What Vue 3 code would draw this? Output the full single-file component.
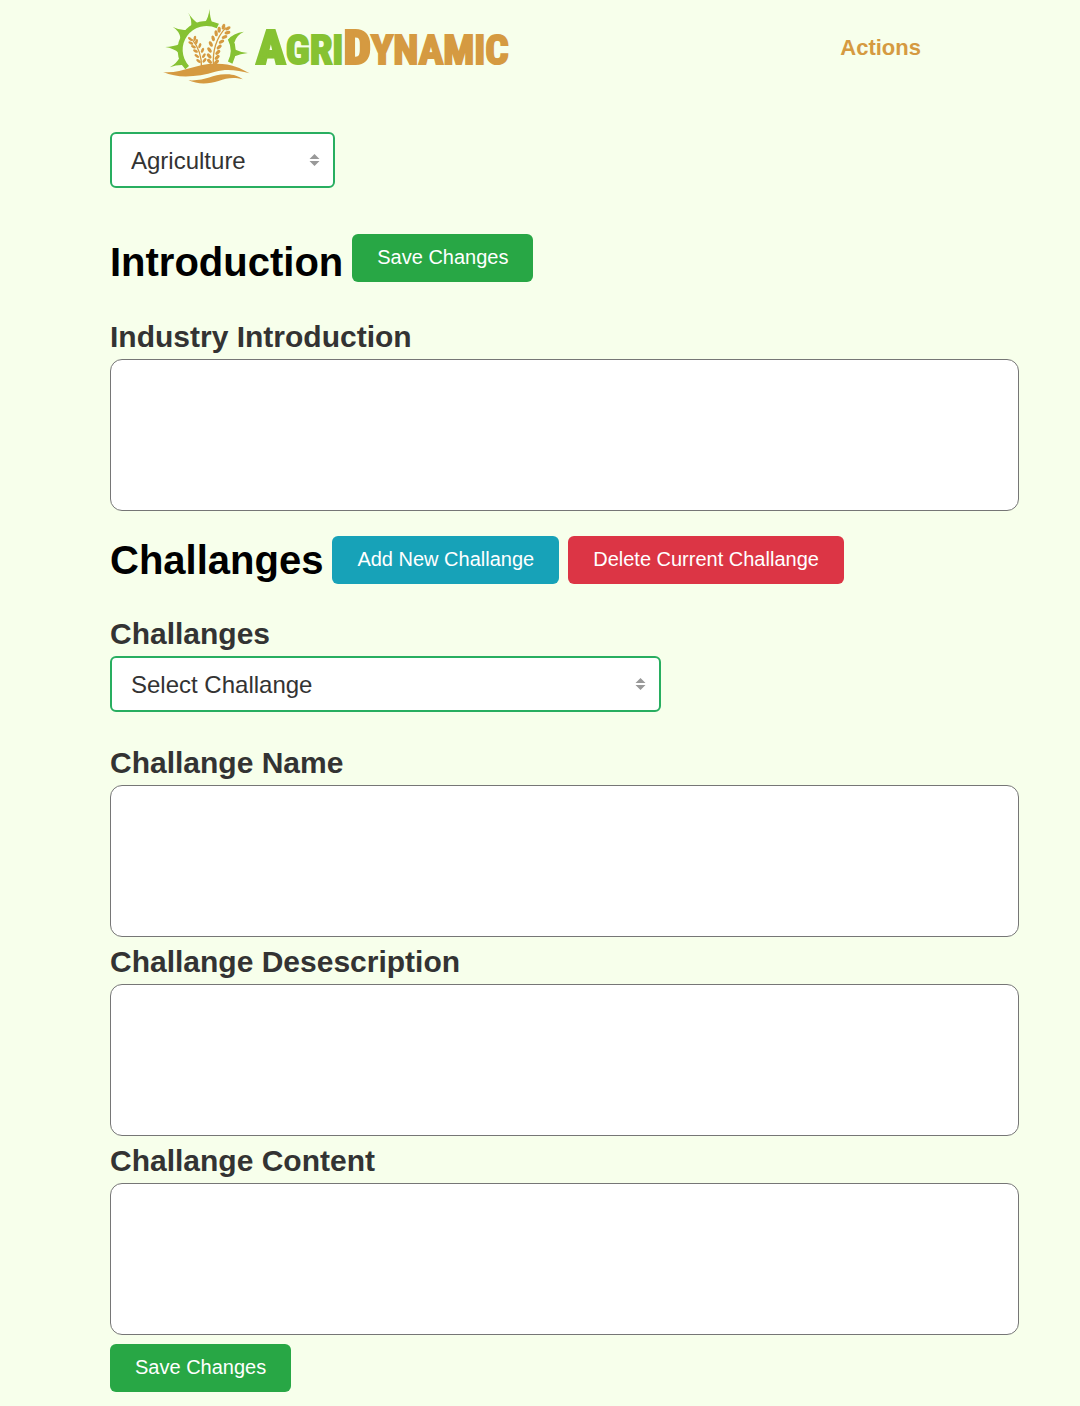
<script setup>
import { ref } from 'vue'

const industry = ref('Agriculture')
const challange = ref('')
const introduction = ref('')
const fields = ref([
  { id: 'challange-name', label: 'Challange Name', value: '' },
  { id: 'challange-description', label: 'Challange Desescription', value: '' },
  { id: 'challange-content', label: 'Challange Content', value: '' },
])

// Wheat grains: x, y and rotation of each grain
const grains = [
  [105, 118, 50], [119, 116, 10], [107, 130, 65], [124, 126, 15], [115, 141, 65], [134, 138, 20],
  [121, 154, 60], [142, 152, 25], [125, 169, 55], [146, 168, 35], [130, 184, 50], [148, 182, 40],
]
const bigGrains = [
  [205, 81, 15], [218, 86, 60], [192, 90, 0], [217, 99, 75], [183, 101, -5], [208, 112, 70],
  [174, 116, -15], [199, 126, 60], [167, 133, -25], [192, 142, 50], [163, 151, -35], [188, 158, 45],
  [162, 169, -40], [186, 173, 45], [163, 185, -45], [184, 187, 45],
]
</script>

<template>
  <div class="page">
    <header class="header">
      <a class="brand" href="#" aria-label="AgriDynamic">
        <svg class="mark" viewBox="24 28 260 225" aria-hidden="true">
          <g fill="none" stroke="#86c232" stroke-width="15">
            <path d="M96 204A79 79 0 0 1 188 79" />
            <path d="M225 117A79 79 0 0 1 225 189" />
          </g>
          <g fill="#86c232">
            <path d="M148 70Q160 56 163 28Q164 54 172 72Z" />
            <path d="M107 83Q112 60 99 39Q113 62 131 72Z" />
            <path d="M76 116Q73 94 53 82Q75 93 96 90Z" />
            <path d="M71 160Q56 146 30 142Q56 141 73 133Z" />
            <path d="M88 196Q66 194 44 203Q66 190 74 172Z" />
            <path d="M218 120Q234 100 266 96Q244 106 238 128Z" />
            <path d="M237 149Q255 158 278 160Q255 162 239 170Z" />
          </g>
          <g fill="none" stroke="#d59a41" stroke-width="4">
            <path d="M139 206Q141 155 111 119" />
            <path d="M175 201Q169 130 212 84" />
          </g>
          <g fill="#d59a41">
            <ellipse
              v-for="([x, y, r], i) in grains" :key="'s' + i"
              rx="4" ry="8" :transform="`translate(${x} ${y}) rotate(${i % 2 ? r : -r})`"
            />
            <ellipse
              v-for="([x, y, r], i) in bigGrains" :key="'b' + i"
              rx="5" ry="9" :transform="`translate(${x} ${y}) rotate(${r})`"
            />
            <path d="M24 217C80 222 120 192 180 192C230 191 255 205 283 221C250 212 215 206 180 216C130 231 70 238 24 217Z" />
            <path d="M100 242C150 245 170 225 210 224C235 223 250 230 263 239C235 232 215 235 190 244C160 254 125 254 100 242Z" />
          </g>
        </svg>
        <span class="wordmark"><span class="agri"><b>A</b>GRI</span><span class="dynamic"><b>D</b>YNAMIC</span></span>
      </a>
      <nav><a class="nav-link" href="#">Actions</a></nav>
    </header>

    <main class="content">
      <div class="select-box industry">
        <select v-model="industry" aria-label="Industry">
          <option>Agriculture</option>
        </select>
        <svg class="arrows" viewBox="0 0 10 14" aria-hidden="true"><path d="M0 6L5 1L10 6ZM0 8H10L5 13Z" /></svg>
      </div>

      <div class="title-row intro-title">
        <h2>Introduction</h2>
        <button class="btn save" type="button">Save Changes</button>
      </div>
      <label class="label" for="introduction">Industry Introduction</label>
      <textarea id="introduction" v-model="introduction"></textarea>

      <div class="title-row challange-title">
        <h2>Challanges</h2>
        <button class="btn add" type="button">Add New Challange</button>
        <button class="btn delete" type="button">Delete Current Challange</button>
      </div>
      <label class="label" for="challange">Challanges</label>
      <div class="select-box challange">
        <select id="challange" v-model="challange">
          <option value="">Select Challange</option>
        </select>
        <svg class="arrows" viewBox="0 0 10 14" aria-hidden="true"><path d="M0 6L5 1L10 6ZM0 8H10L5 13Z" /></svg>
      </div>

      <template v-for="field in fields" :key="field.id">
        <label class="label" :for="field.id">{{ field.label }}</label>
        <textarea :id="field.id" v-model="field.value"></textarea>
      </template>
      <button class="btn save last" type="button">Save Changes</button>
    </main>
  </div>
</template>

<style>
body {
  margin: 0;
  background: #f7ffeb;
}
</style>

<style scoped>
.page {
  font-family: "Liberation Sans", Arial, sans-serif;
  color: #333;
}
.header {
  display: flex;
  justify-content: space-between;
  align-items: center;
  height: 96px;
  padding: 0 159px 0 163px;
}
.brand {
  display: flex;
  align-items: center;
  gap: 6px;
  padding-bottom: 3px;
  text-decoration: none;
}
.mark {
  width: 87px;
  height: 75px;
}
.wordmark {
  padding-top: 4px;
  font-family: "Roboto Condensed", Roboto, sans-serif;
  font-weight: 700;
  font-size: 41px;
  line-height: 60px;
  white-space: nowrap;
  -webkit-text-stroke: 2px;
}
.wordmark b {
  font-size: 49px;
}
.agri {
  color: #86c232;
}
.dynamic {
  color: #d59a41;
}
.nav-link {
  color: #d59a41;
  font-size: 22px;
  font-weight: 700;
  text-decoration: none;
}
.content {
  display: flex;
  flex-direction: column;
  align-items: flex-start;
  padding: 36px 61px 14px 110px;
}
.select-box {
  position: relative;
  width: 100%;
}
.industry {
  max-width: 225px;
}
.challange {
  max-width: 551px;
  margin-bottom: 26px;
}
select {
  appearance: none;
  display: block;
  box-sizing: border-box;
  width: 100%;
  height: 56px;
  padding: 0 40px 0 19px;
  border: 2px solid #28ae60;
  border-radius: 6px;
  background: #fff;
  color: #333;
  font: 24px "Liberation Sans", Arial, sans-serif;
}
.arrows {
  position: absolute;
  top: 21px;
  right: 15px;
  width: 11px;
  height: 14px;
  fill: #999;
  pointer-events: none;
}
.title-row {
  display: flex;
  gap: 9px;
}
.intro-title {
  align-items: flex-start;
  margin: 46px 0 22px;
}
.challange-title {
  align-items: center;
  margin: 21px 0;
}
h2 {
  margin: 0;
  color: #000;
  font-size: 40px;
  line-height: 56px;
}
.btn {
  height: 48px;
  padding: 0 25px 2px;
  border: 0;
  border-radius: 6px;
  color: #fff;
  font: 20px "Liberation Sans", Arial, sans-serif;
}
.save {
  background: #28a745;
}
.add {
  background: #17a2b8;
}
.delete {
  background: #dc3545;
}
.last {
  margin-top: 9px;
}
.label {
  padding-top: 2px;
  font-size: 30px;
  font-weight: 700;
  line-height: 45px;
}
textarea {
  display: block;
  box-sizing: border-box;
  width: 100%;
  height: 152px;
  padding: 12px 20px;
  border: 1px solid #767676;
  border-radius: 12px;
  background: #fff;
  resize: none;
  font: 24px "Liberation Sans", Arial, sans-serif;
}
</style>
